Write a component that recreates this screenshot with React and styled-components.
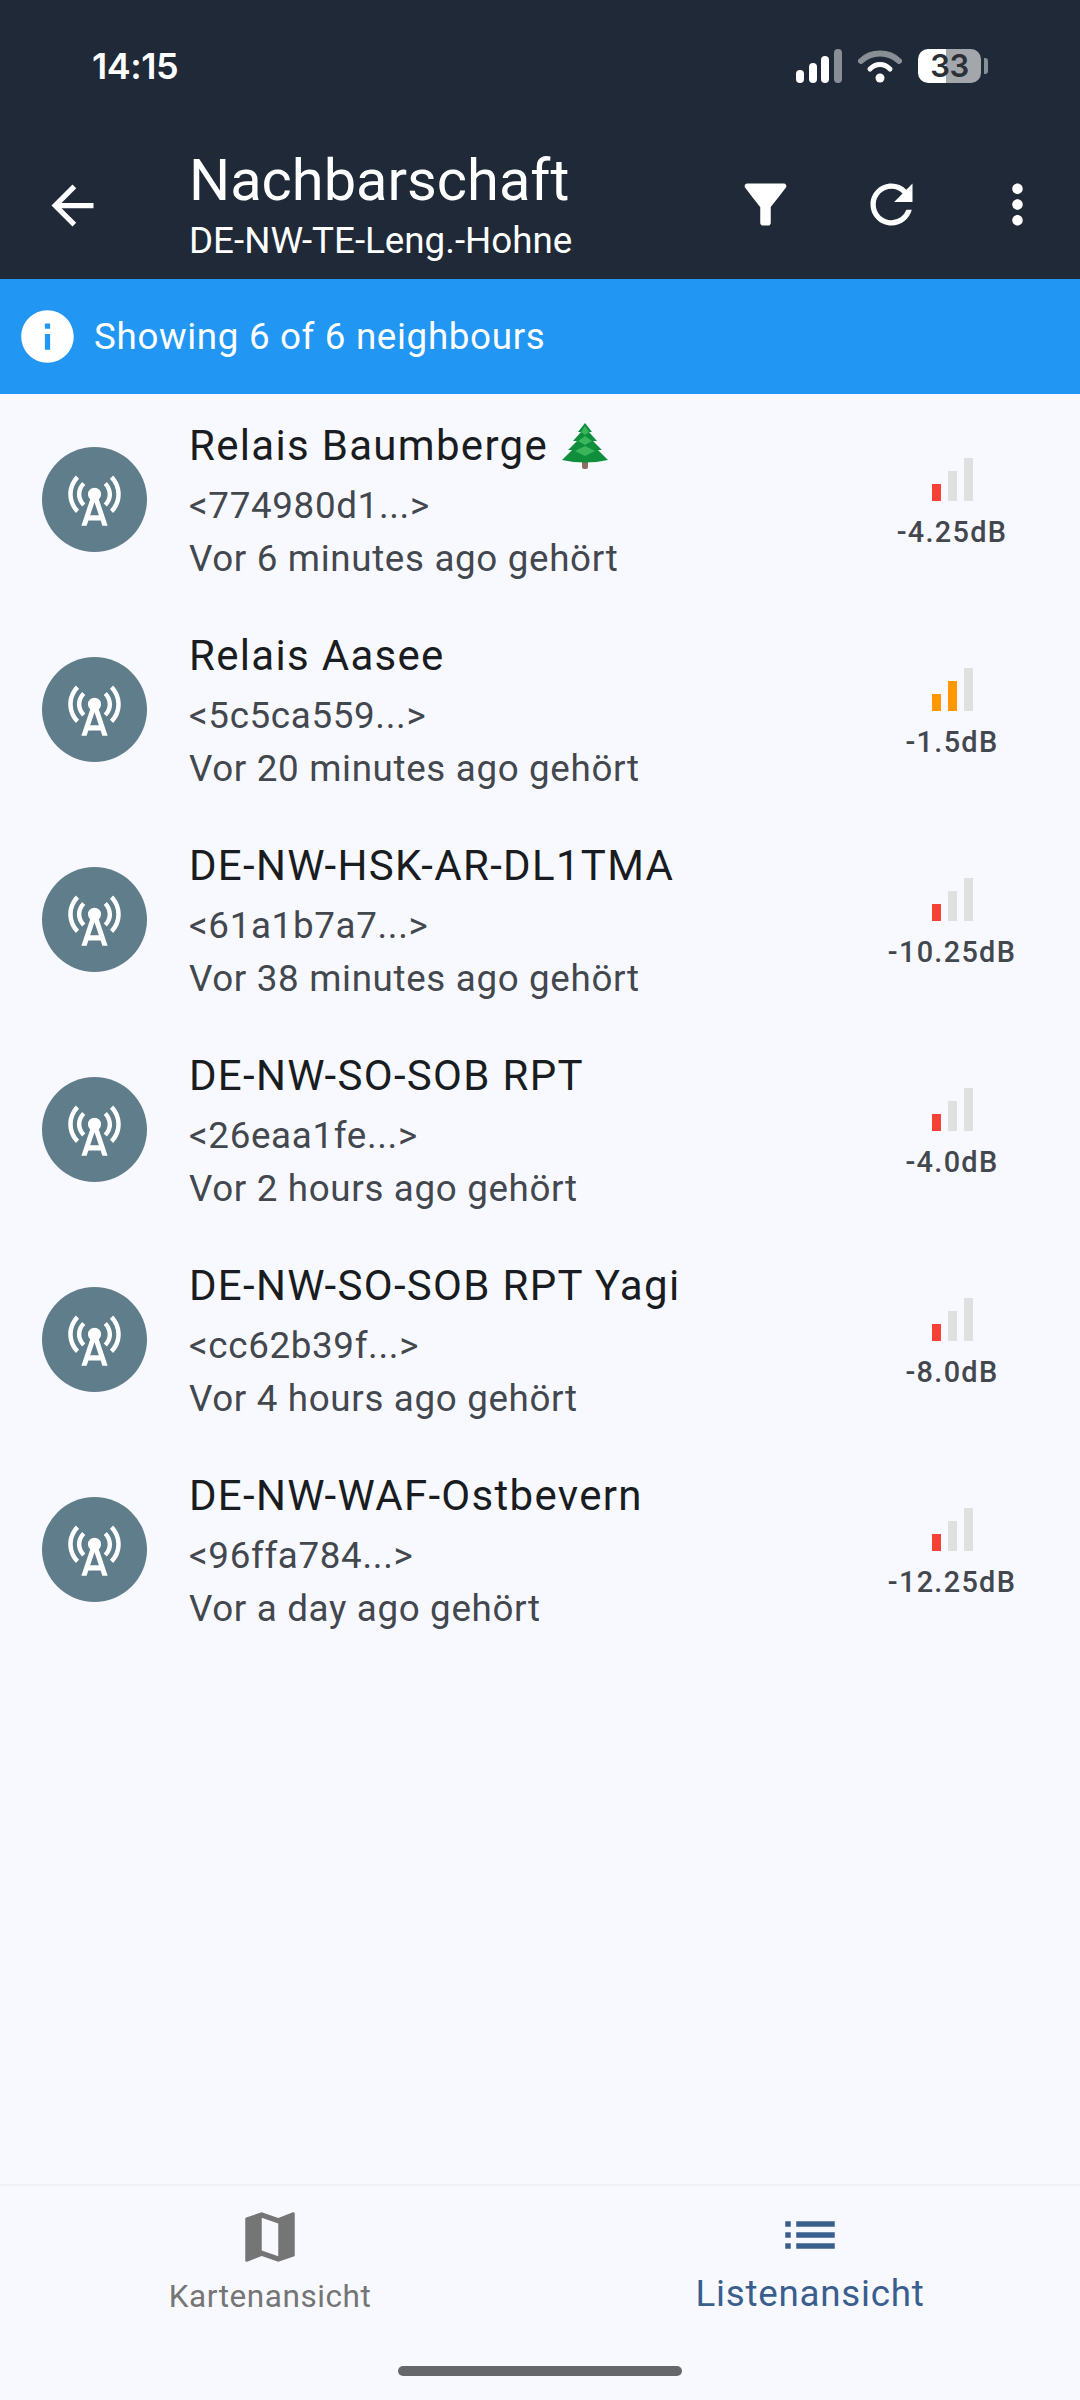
import React from 'react';
import styled, { createGlobalStyle } from 'styled-components';
import {
  MdArrowBack,
  MdCellTower,
  MdFilterAlt,
  MdInfo,
  MdList,
  MdMap,
  MdMoreVert,
  MdRefresh,
} from 'react-icons/md';

const GlobalStyle = createGlobalStyle`
  html, body {
    margin: 0;
    padding: 0;
    background: #f8f9ff;
    font-family: Roboto, "Liberation Sans", sans-serif;
  }
`;

const Screen = styled.div`
  width: 1080px;
  height: 2400px;
  display: flex;
  flex-direction: column;
  background: #f8f9ff;
  overflow: hidden;
`;

const Header = styled.header`
  height: 279px;
  flex: none;
  background: #1f2937;
  color: #fff;
  display: flex;
  flex-direction: column;
`;

const StatusBar = styled.div`
  height: 131px;
  flex: none;
  display: flex;
  justify-content: space-between;
  align-items: center;
  padding: 0 92px 0 92px;
  box-sizing: border-box;
`;

const Clock = styled.div`
  font-family: Inter, Roboto, sans-serif;
  font-size: 36px;
  font-weight: 600;
  letter-spacing: -0.5px;
`;

const StatusIcons = styled.div`
  display: flex;
  align-items: center;
  gap: 16px;
`;

const Battery = styled.div`
  width: 63px;
  height: 34px;
  border-radius: 10px;
  background: linear-gradient(90deg, #fff 0 45%, #a3a6ab 45% 100%);
  color: #2a2f38;
  font-family: Inter, Roboto, sans-serif;
  font-size: 31px;
  font-weight: 600;
  letter-spacing: -0.5px;
  display: flex;
  align-items: center;
  justify-content: center;
  margin-right: 7px;
  position: relative;

  &::after {
    content: '';
    position: absolute;
    right: -7px;
    top: 9px;
    width: 4px;
    height: 16px;
    border-radius: 0 3px 3px 0;
    background: #8a8e95;
  }
`;

const AppBar = styled.div`
  flex: 1;
  display: flex;
  align-items: center;
`;

const BackCell = styled.div`
  width: 189px;
  flex: none;
  display: flex;
  padding-left: 41px;
  box-sizing: border-box;
  font-size: 63px;
`;

const TitleBlock = styled.div`
  flex: 1;
  margin-top: -1px;
`;

const Title = styled.div`
  font-size: 57.75px;
  line-height: 72px;
`;

const Subtitle = styled.div`
  font-size: 36.75px;
  line-height: 50px;
  letter-spacing: 0;
`;

const ActionButton = styled.div`
  width: 126px;
  flex: none;
  display: flex;
  justify-content: center;
  font-size: 63px;
  margin-top: -1px;
`;

const Banner = styled.div`
  height: 115px;
  flex: none;
  background: #2196f3;
  color: #fff;
  display: flex;
  align-items: center;
  gap: 15px;
  padding-left: 16px;
  font-size: 36.75px;
  letter-spacing: 0.66px;
`;

const BannerIcon = styled(MdInfo)`
  font-size: 63px;
`;

const List = styled.div`
  flex: 1;
  display: flex;
  flex-direction: column;
`;

const Row = styled.div`
  height: 210px;
  flex: none;
  display: flex;
  align-items: center;
  padding: 0 58px 0 42px;
`;

const Avatar = styled.div`
  width: 105px;
  height: 105px;
  flex: none;
  border-radius: 50%;
  background: #607d8b;
  color: #fff;
  display: flex;
  align-items: center;
  justify-content: center;
  font-size: 63px;
  margin-right: 42px;
`;

const RowText = styled.div`
  flex: 1;
  min-width: 0;
  margin-top: 3px;
`;

const RowTitle = styled.div`
  font-size: 42px;
  line-height: 60px;
  letter-spacing: 1.31px;
  color: #191c20;
  display: flex;
  align-items: center;
  gap: 14px;
  margin-bottom: 3px;
`;

const RowMeta = styled.div`
  font-size: 36.75px;
  line-height: 53px;
  letter-spacing: 0.66px;
  color: #43474e;
`;

const Signal = styled.div`
  width: 140px;
  flex: none;
  display: flex;
  flex-direction: column;
  align-items: center;
  margin-top: 10px;
`;

const Bars = styled.div`
  display: flex;
  align-items: flex-end;
  gap: 7px;
  height: 43px;
  margin-bottom: 13px;
`;

const Bar = styled.div`
  width: 9px;
  height: ${(p) => p.$height}px;
  background: ${(p) => p.$color};
`;

const Db = styled.div`
  font-size: 28.875px;
  line-height: 36px;
  font-weight: 500;
  letter-spacing: 1.31px;
  color: #43474e;
`;

const BottomNav = styled.nav`
  height: 216px;
  flex: none;
  border-top: 2px solid #eff0f4;
  box-sizing: border-box;
  display: flex;
  flex-direction: column;
`;

const Tabs = styled.div`
  display: flex;
  height: 156px;
`;

const Tab = styled.div`
  flex: 1;
  display: flex;
  flex-direction: column;
  align-items: center;
  color: ${(p) => (p.$active ? '#3a5f8f' : '#757575')};
  font-size: ${(p) => (p.$active ? '36.75px' : '31.5px')};
  letter-spacing: ${(p) => (p.$active ? '0.75px' : '0.55px')};
  padding-top: ${(p) => (p.$active ? '16px' : '18px')};
`;

const TabIcon = styled.div`
  font-size: 66px;
  line-height: 0;
  height: 66px;
  margin-bottom: ${(p) => (p.$active ? '4px' : '8px')};
`;

const HomeIndicator = styled.div`
  width: 284px;
  height: 10px;
  border-radius: 5px;
  background: #66676b;
  margin: 24px auto 0;
`;

const RED = '#f44336';
const ORANGE = '#ff9800';
const GREY = '#e0e0e0';

const neighbours = [
  { name: 'Relais Baumberge', tree: true, id: '<774980d1...>', heard: 'Vor 6 minutes ago gehört', db: '-4.25dB', level: 1 },
  { name: 'Relais Aasee', id: '<5c5ca559...>', heard: 'Vor 20 minutes ago gehört', db: '-1.5dB', level: 2 },
  { name: 'DE-NW-HSK-AR-DL1TMA', id: '<61a1b7a7...>', heard: 'Vor 38 minutes ago gehört', db: '-10.25dB', level: 1 },
  { name: 'DE-NW-SO-SOB RPT', id: '<26eaa1fe...>', heard: 'Vor 2 hours ago gehört', db: '-4.0dB', level: 1 },
  { name: 'DE-NW-SO-SOB RPT Yagi', id: '<cc62b39f...>', heard: 'Vor 4 hours ago gehört', db: '-8.0dB', level: 1 },
  { name: 'DE-NW-WAF-Ostbevern', id: '<96ffa784...>', heard: 'Vor a day ago gehört', db: '-12.25dB', level: 1 },
];

const SignalIcon = () => (
  <svg width="46" height="34" viewBox="0 0 46 34">
    <rect x="0" y="21" width="8" height="13" rx="4" fill="#fff" />
    <rect x="13" y="14" width="8" height="20" rx="4" fill="#fff" />
    <rect x="25" y="7" width="8" height="27" rx="4" fill="#fff" />
    <rect x="38" y="0" width="8" height="34" rx="4" fill="#8a8e95" />
  </svg>
);

const WifiIcon = () => (
  <svg width="44" height="34" viewBox="0 0 44 34">
    <path d="M3 12 C13 2 31 2 41 12" fill="none" stroke="#8a8e95" strokeWidth="6" strokeLinecap="round" />
    <path d="M12 20 C18 14 26 14 32 20" fill="none" stroke="#fff" strokeWidth="5" strokeLinecap="round" />
    <circle cx="22" cy="29" r="4.5" fill="#fff" />
  </svg>
);

const Tree = () => (
  <svg width="46" height="46" viewBox="0 0 46 46">
    <rect x="20" y="37" width="6" height="9" rx="2" fill="#8d6e63" />
    <path d="M23 0 L30 9 L27 9 L35 18 L31 18 L40 27 L36 27 L46 37 Q23 42 0 37 L10 27 L6 27 L15 18 L11 18 L19 9 L16 9 Z" fill="#0f8f3c" />
    <path d="M23 3 L27 9 L23 12 L19 9 Z M23 13 L30 18 L23 22 L16 18 Z M23 23 L33 28 L23 33 L13 28 Z" fill="#3bb55a" />
  </svg>
);

const App = () => (
  <Screen>
    <GlobalStyle />
    <Header>
      <StatusBar>
        <Clock>14:15</Clock>
        <StatusIcons>
          <SignalIcon />
          <WifiIcon />
          <Battery>33</Battery>
        </StatusIcons>
      </StatusBar>
      <AppBar>
        <BackCell>
          <MdArrowBack />
        </BackCell>
        <TitleBlock>
          <Title>Nachbarschaft</Title>
          <Subtitle>DE-NW-TE-Leng.-Hohne</Subtitle>
        </TitleBlock>
        <ActionButton>
          <MdFilterAlt />
        </ActionButton>
        <ActionButton>
          <MdRefresh />
        </ActionButton>
        <ActionButton>
          <MdMoreVert />
        </ActionButton>
      </AppBar>
    </Header>
    <Banner>
      <BannerIcon />
      Showing 6 of 6 neighbours
    </Banner>
    <List>
      {neighbours.map((n) => (
        <Row key={n.id}>
          <Avatar>
            <MdCellTower />
          </Avatar>
          <RowText>
            <RowTitle>
              {n.name}
              {n.tree && <Tree />}
            </RowTitle>
            <RowMeta>{n.id}</RowMeta>
            <RowMeta>{n.heard}</RowMeta>
          </RowText>
          <Signal>
            <Bars>
              <Bar $height={17} $color={n.level === 2 ? ORANGE : RED} />
              <Bar $height={30} $color={n.level === 2 ? ORANGE : GREY} />
              <Bar $height={43} $color={GREY} />
            </Bars>
            <Db>{n.db}</Db>
          </Signal>
        </Row>
      ))}
    </List>
    <BottomNav>
      <Tabs>
        <Tab>
          <TabIcon>
            <MdMap />
          </TabIcon>
          Kartenansicht
        </Tab>
        <Tab $active>
          <TabIcon $active>
            <MdList />
          </TabIcon>
          Listenansicht
        </Tab>
      </Tabs>
      <HomeIndicator />
    </BottomNav>
  </Screen>
);

export default App;
